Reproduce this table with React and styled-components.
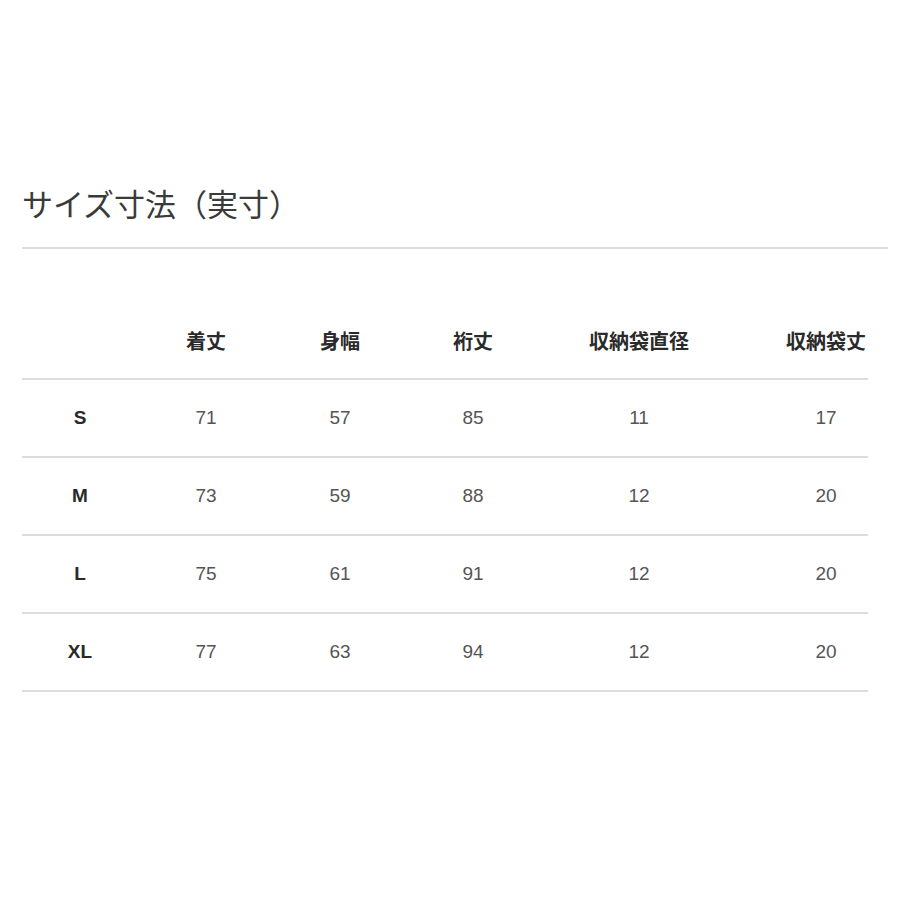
import React from 'react';
import styled, { createGlobalStyle } from 'styled-components';

const GlobalStyle = createGlobalStyle`
    html, body {
        margin: 0;
        padding: 0;
        background: #ffffff;
    }
    body {
        font-family: "Liberation Sans", "Noto Sans CJK JP", sans-serif;
    }
`;

const headers = ['着丈', '身幅', '裄丈', '収納袋直径', '収納袋丈'];

const rows = [
    { size: 'S', values: [71, 57, 85, 11, 17] },
    { size: 'M', values: [73, 59, 88, 12, 20] },
    { size: 'L', values: [75, 61, 91, 12, 20] },
    { size: 'XL', values: [77, 63, 94, 12, 20] },
];

const App = () => {
    return (
        <Page>
            <GlobalStyle />
            <Title>サイズ寸法（実寸）</Title>
            <TitleRule />
            <Table>
                <Row>
                    <Cell />
                    {headers.map((h) => (
                        <Cell key={h} $head>{h}</Cell>
                    ))}
                </Row>
                {rows.map((r) => (
                    <Row key={r.size}>
                        <Cell $head $size>{r.size}</Cell>
                        {r.values.map((v, i) => (
                            <Cell key={i}>{v}</Cell>
                        ))}
                    </Row>
                ))}
            </Table>
        </Page>
    );
};

export default App;

const Page = styled.div`
    width: 900px;
    height: 900px;
    box-sizing: border-box;
    padding: 183px 0 0 22px;
    overflow: hidden;
`;

const Title = styled.h2`
    margin: 0;
    font-family: "Noto Sans CJK JP", sans-serif;
    font-weight: 400;
    font-size: 31px;
    line-height: 40px;
    color: #3a3a3a;
`;

const TitleRule = styled.div`
    width: 866px;
    height: 2px;
    margin-top: 24px;
    background: #dcdcdc;
`;

const Table = styled.div`
    width: 846px;
    margin-top: 53px;
`;

const Row = styled.div`
    display: grid;
    grid-template-columns: 116px 136px 132px 134px 198px 176px;
    align-items: center;
    height: 76px;
    border-bottom: 2px solid #dcdcdc;
`;

const Cell = styled.div`
    text-align: center;
    font-size: ${(p) => (p.$head && !p.$size ? '20px' : '19px')};
    font-weight: ${(p) => (p.$head ? 700 : 400)};
    color: ${(p) => (p.$head ? '#2a2a2a' : '#555555')};
    white-space: nowrap;
`;
